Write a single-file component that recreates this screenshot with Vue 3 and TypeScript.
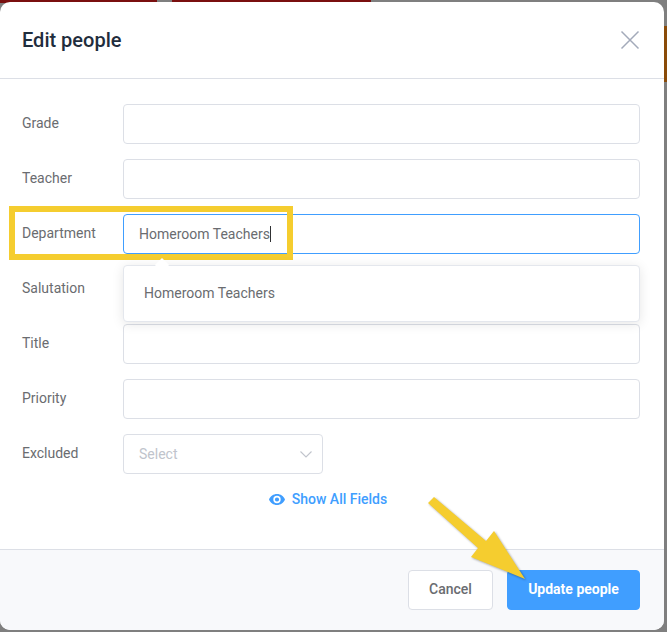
<template>
  <div class="screen">
    <span class="strip strip-red-a"></span>
    <span class="strip strip-red-b"></span>
    <span class="strip strip-orange"></span>

    <div class="dialog">
      <header class="head">
        <h2>Edit people</h2>
        <svg class="close" width="20" height="20" viewBox="0 0 20 20">
          <path d="M1.500 1.500 L18.500 18.500 M18.500 1.500 L1.500 18.500" stroke="#a3aaba" stroke-width="1.500" fill="none" />
        </svg>
      </header>

      <div class="body">
        <div v-for="field in fields" :key="field" class="row">
          <label>{{ field }}</label>
          <div v-if="field === 'Department'" class="field focused">
            <span>Homeroom Teachers</span><i class="caret"></i>
          </div>
          <div v-else class="field"></div>
          <div v-if="field === 'Department'" class="suggest">
            <span class="notch"></span>
            Homeroom Teachers
          </div>
        </div>

        <div class="row">
          <label>Excluded</label>
          <div class="field select">
            <span>Select</span>
            <svg width="12" height="7" viewBox="0 0 12 7">
              <path d="M0.5 0.5 L6 6 L11.5 0.5" stroke="#c0c4cc" stroke-width="1.1" fill="none" />
            </svg>
          </div>
        </div>

        <div class="show-all">
          <svg width="16" height="11" viewBox="0 0 16 11">
            <path
              fill-rule="evenodd"
              fill="#409eff"
              d="M8 0C4.4 0 1.4 2.2 0 5.5 1.4 8.8 4.4 11 8 11s6.6-2.2 8-5.5C14.600 2.200 11.600 0 8 0Zm0 9.200a3.700 3.700 0 1 1 0-7.400 3.700 3.700 0 0 1 0 7.400Zm0-5.800a2.100 2.100 0 1 0 0 4.200 2.100 2.100 0 0 0 0-4.200Z"
            />
          </svg>
          <span>Show All Fields</span>
        </div>
      </div>

      <footer class="foot">
        <button class="btn">Cancel</button>
        <button class="btn primary">Update people</button>
      </footer>
    </div>

    <!-- annotations drawn over the screenshot -->
    <div class="highlight"></div>
    <svg class="arrow" width="667" height="632" viewBox="0 0 667 632">
      <path
        d="M428 503 L434 497 L486 541 L494 531 L525 579 L471 557 L478 548 Z"
        fill="#f5cd2f"
      />
    </svg>
  </div>
</template>

<script setup lang="ts">
const fields: string[] = ['Grade', 'Teacher', 'Department', 'Salutation', 'Title', 'Priority'];
</script>

<style>
html,
body {
  margin: 0;
  background: #7f7f7f;
}
</style>

<style scoped>
.screen {
  position: relative;
  width: 667px;
  height: 632px;
  overflow: hidden;
  padding-top: 2px;
  box-sizing: border-box;
  background: #7f7f7f;
  font-family: Roboto, "Liberation Sans", sans-serif;
  font-size: 14px;
  color: #6a6c70;
}
.strip {
  position: absolute;
}
.strip-red-a {
  left: 0;
  top: 0;
  width: 157px;
  height: 3px;
  background: #7a0f0f;
}
.strip-red-b {
  left: 172px;
  top: 0;
  width: 199px;
  height: 3px;
  background: #7a0f0f;
}
.strip-orange {
  right: 0;
  top: 26px;
  width: 3px;
  height: 56px;
  background: #8a4b08;
}
.dialog {
  position: relative;
  width: 664px;
  height: 628px;
  display: flex;
  flex-direction: column;
  background: #fff;
  border-radius: 10px;
  overflow: hidden;
}
.head {
  height: 76px;
  flex: none;
  display: flex;
  align-items: center;
  justify-content: space-between;
  padding: 0 24px 0 22px;
  border-bottom: 1px solid #dcdfe6;
}
.head h2 {
  margin: 0;
  font-size: 20px;
  font-weight: 500;
  color: #1f2d3d;
}
.body {
  flex: 1;
  padding: 25px 24px 0 22px;
  display: flex;
  flex-direction: column;
  gap: 15px;
}
.row {
  position: relative;
  display: flex;
  align-items: center;
  height: 40px;
}
.row label {
  width: 101px;
  flex: none;
  position: relative;
  top: -1px;
}
.field {
  flex: 1;
  height: 40px;
  box-sizing: border-box;
  display: flex;
  align-items: center;
  padding: 0 15px 1px;
  border: 1px solid #dcdfe6;
  border-radius: 4px;
  background: #fff;
}
.focused {
  border-color: #409eff;
}
.caret {
  display: inline-block;
  width: 1px;
  height: 16px;
  background: #303133;
}
.select {
  flex: none;
  width: 200px;
  justify-content: space-between;
  color: #c0c4cc;
  padding: 0 10px 0 15px;
}
.suggest {
  position: absolute;
  z-index: 2;
  left: 101px;
  right: 0;
  top: 51px;
  height: 57px;
  box-sizing: border-box;
  padding: 0 20px 1px;
  display: flex;
  align-items: center;
  background: #fff;
  border: 1px solid #e4e7ed;
  border-radius: 4px;
  box-shadow: 0 2px 12px rgba(0, 0, 0, 0.1);
}
.notch {
  position: absolute;
  left: 33px;
  top: -6px;
  width: 10px;
  height: 10px;
  background: #fff;
  transform: rotate(45deg);
}
.show-all {
  display: flex;
  align-items: center;
  justify-content: center;
  gap: 7px;
  height: 20px;
  padding-right: 6px;
  color: #409eff;
  font-weight: 500;
}
.foot {
  height: 81px;
  flex: none;
  box-sizing: border-box;
  display: flex;
  align-items: center;
  justify-content: flex-end;
  gap: 14px;
  padding: 0 24px 1px;
  background: #f8f9fb;
  border-top: 1px solid #dcdfe6;
}
.btn {
  height: 40px;
  padding: 0 0 1px;
  width: 85px;
  border: 1px solid #dcdfe6;
  border-radius: 4px;
  background: #fff;
  color: #6a6c70;
  font-family: inherit;
  font-size: 14px;
  font-weight: 500;
}
.primary {
  width: 133px;
  border-color: #409eff;
  background: #409eff;
  color: #fff;
  font-weight: 700;
}
.highlight {
  position: absolute;
  left: 9px;
  top: 206px;
  width: 284px;
  height: 54px;
  box-sizing: border-box;
  border: 6px solid #f5cd2f;
  pointer-events: none;
}
.arrow {
  position: absolute;
  left: 0;
  top: 0;
  pointer-events: none;
  filter: drop-shadow(1px 1px 1px rgba(0, 0, 0, 0.35));
}
</style>
